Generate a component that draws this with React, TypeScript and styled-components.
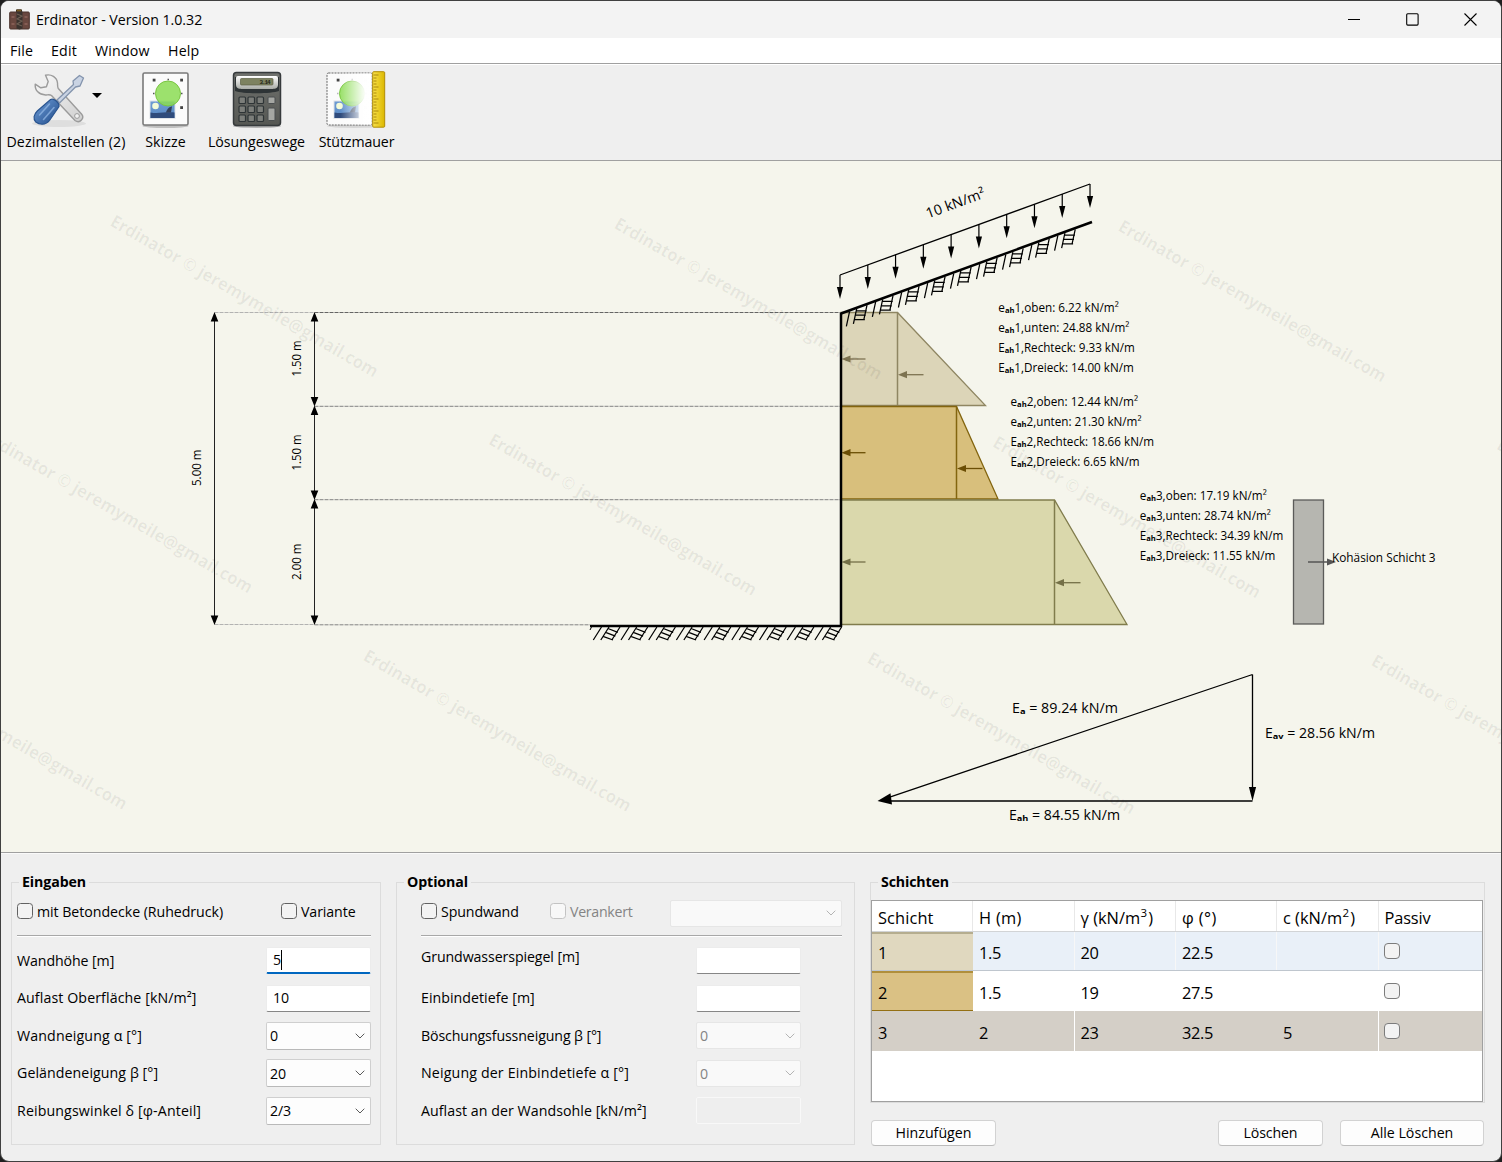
import React from "react";
import styled, { createGlobalStyle } from "styled-components";

const FONT = '"Open Sans", "Noto Sans", sans-serif';

const Global = createGlobalStyle`
  html, body { margin: 0; padding: 0; background: #1f1f1f; }
  * { box-sizing: border-box; }
  body { font-family: ${FONT}; font-size: 14.2px; color: #000; }
`;

const Window = styled.div`
  width: 1502px;
  height: 1162px;
  display: flex;
  flex-direction: column;
  border: 1px solid #404040;
  border-radius: 9px;
  overflow: hidden;
  background: #efefef;
`;

const TitleBar = styled.header`
  display: flex;
  align-items: center;
  height: 37px;
  background: #f3f3f3;
  padding-left: 8px;
`;
const Title = styled.span`
  margin-left: 6px;
  flex: 1;
  font-size: 14.2px;
  letter-spacing: -0.04px;
`;
const Caption = styled.div`
  width: 58.5px;
  height: 36px;
  display: flex;
  align-items: center;
  justify-content: center;
`;
const Captions = styled.div`
  display: flex;
  padding-right: 1px;
`;

const MenuBar = styled.nav`
  display: flex;
  align-items: center;
  gap: 18px;
  height: 25px;
  padding-left: 9px;
  background: #fff;
`;
const MenuItem = styled.span<{ $w: number; $ls?: number }>`
  width: ${(p) => p.$w}px;
  white-space: nowrap;
  letter-spacing: ${(p) => p.$ls ?? 0.2}px;
`;

const ToolBar = styled.div`
  display: flex;
  height: 98px;
  border-top: 1px solid #a0a0a0;
  border-bottom: 1px solid #a0a0a0;
  box-shadow: inset 0 1px 0 #fff;
  padding: 6px 0 0 5px;
`;
const Tool = styled.div<{ $w: number; $gap?: number }>`
  width: ${(p) => p.$w}px;
  margin-right: ${(p) => p.$gap ?? 0}px;
  display: flex;
  flex-direction: column;
  align-items: center;
`;
const ToolIcon = styled.div<{ $pad?: string }>`
  display: flex;
  align-items: center;
  height: 60px;
  padding: ${(p) => p.$pad ?? "0"};
`;
const ToolLabel = styled.span<{ $ls?: number }>`
  line-height: 20px;
  margin-top: 2px;
  white-space: nowrap;
  letter-spacing: ${(p) => p.$ls ?? 0}px;
`;
const DropMark = styled.svg`
  margin-bottom: 4px;
`;

const Canvas = styled.main`
  height: 691px;
  background: #f5f5ec;
  svg { display: block; }
`;

const Bottom = styled.section`
  flex: 1;
  display: flex;
  align-items: flex-start;
  border-top: 1px solid #a0a0a0;
  box-shadow: inset 0 1px 0 #fafafa;
  padding: 19px 0 0 10px;
`;
const Group = styled.fieldset<{ $w: number; $h: number; $gap?: number; $pad: string }>`
  margin: 0 ${(p) => p.$gap ?? 0}px 0 0;
  width: ${(p) => p.$w}px;
  height: ${(p) => p.$h}px;
  min-width: 0;
  border: 1px solid #dcdcdc;
  padding: ${(p) => p.$pad};
`;
const Legend = styled.legend<{ $ml: number; $ls?: number }>`
  height: 20px;
  line-height: 20px;
  margin-left: ${(p) => p.$ml}px;
  padding: 0 3px;
  font-size: 14.2px;
  font-weight: 700;
  letter-spacing: ${(p) => p.$ls ?? -0.1}px;
`;
const CheckRow = styled.div<{ $nudge?: number }>`
  display: flex;
  align-items: center;
  height: 28px;
  margin-top: 7px;
`;
const CheckLabel = styled.label<{ $w: number; $off?: boolean; $ls?: number }>`
  display: flex;
  align-items: center;
  gap: 4px;
  width: ${(p) => p.$w}px;
  height: 20px;
  margin-bottom: 3px;
  white-space: nowrap;
  color: ${(p) => (p.$off ? "#848484" : "#000")};
  letter-spacing: ${(p) => p.$ls ?? -0.05}px;
`;
const Box = styled.span<{ $off?: boolean }>`
  flex: none;
  width: 16px;
  height: 16px;
  margin-bottom: 1px;
  border: 1px solid ${(p) => (p.$off ? "#c3c3c3" : "#626262")};
  border-radius: 3.5px;
  background: ${(p) => (p.$off ? "#f8f8f8" : "#f3f3f3")};
`;
const Rule = styled.div`
  height: 2px;
  margin-top: 8px;
  background: #fff;
  border-top: 1px solid #a8a8a8;
`;
const Form = styled.div<{ $end: number }>`
  display: grid;
  grid-template-columns: 1fr 105px;
  grid-auto-rows: 27.5px;
  row-gap: 10px;
  margin: 10px ${(p) => p.$end}px 0 0;
  align-items: center;
`;
const FieldLabel = styled.span<{ $ls?: number; $up?: number }>`
  white-space: nowrap;
  line-height: 20px;
  padding-bottom: ${(p) => p.$up ?? 0}px;
  letter-spacing: ${(p) => p.$ls ?? 0}px;
`;
const Input = styled.div<{ $state?: "focus" | "off" }>`
  display: flex;
  align-items: center;
  height: 27px;
  padding: 0 0 1px 6px;
  border: 1px solid ${(p) => (p.$state === "off" ? "#f8f8f8" : "#ececec")};
  border-bottom: ${(p) =>
    p.$state === "focus" ? "2px solid #0067c0" : p.$state === "off" ? "1px solid #f8f8f8" : "1px solid #868686"};
  border-radius: 2px;
  background: ${(p) => (p.$state === "off" ? "#eeeeee" : "#fff")};
  letter-spacing: -0.2px;
`;
const Caret = styled.span`
  width: 1px;
  height: 20px;
  background: #000;
`;
const SelectBox = styled.div<{ $off?: boolean; $w?: number }>`
  display: flex;
  align-items: center;
  justify-content: space-between;
  width: ${(p) => (p.$w ? p.$w + "px" : "auto")};
  height: ${(p) => (p.$off ? 27 : 28)}px;
  padding: 0 5px 0 3px;
  border: 1px solid ${(p) => (p.$off ? "#e6e6e6" : "#cfcfcf")};
  border-bottom-color: ${(p) => (p.$off ? "#e6e6e6" : "#b9b9b9")};
  border-radius: 2px;
  background: ${(p) => (p.$off ? "#f9f9f9" : "#fdfdfd")};
  color: ${(p) => (p.$off ? "#848484" : "#000")};
  letter-spacing: -0.2px;
`;

const LayerPane = styled.div`
  width: 615px;
  display: flex;
  flex-direction: column;
`;
const Table = styled.div`
  width: 612px;
  height: 202px;
  margin-top: 8px;
  background: #fff;
  border: 1px solid #a0a0a0;
  font-size: 16.4px;
`;
const COLS = "101px 101.5px 101.5px 101px 101.5px 1fr";
const HeadRow = styled.div`
  display: grid;
  grid-template-columns: ${COLS};
  height: 31px;
  border-bottom: 1px solid #d2d4d6;
`;
const HeadCell = styled.div<{ $ls?: number }>`
  display: flex;
  align-items: center;
  padding: 2px 0 0 6px;
  border-right: 1px solid #e8e8e8;
  white-space: nowrap;
  letter-spacing: ${(p) => p.$ls ?? 0}px;
  &:last-child { border-right: 0; }
`;
const Sup = styled.span`
  font-size: 11.5px;
  margin: 0 1px 9px 0.5px;
`;
const BodyRow = styled.div<{ $bg: string; $line?: string; $h: number }>`
  display: grid;
  grid-template-columns: ${COLS};
  height: ${(p) => p.$h}px;
  background: ${(p) => p.$bg};
  border-bottom: ${(p) => (p.$line ? `1px solid ${p.$line}` : "0")};
`;
const Cell = styled.div<{ $bg?: string; $top?: string; $bottom?: string; $sep?: string }>`
  display: flex;
  align-items: center;
  padding: 2px 0 0 6px;
  letter-spacing: -0.35px;
  background: ${(p) => p.$bg ?? "transparent"};
  box-shadow: ${(p) =>
    [
      p.$top && `inset 0 2px 0 ${p.$top}`,
      p.$bottom && `inset 0 -1px 0 ${p.$bottom}`,
      p.$sep && `inset -1px 0 0 ${p.$sep}`,
    ]
      .filter(Boolean)
      .join(", ") || "none"};
`;
const TableBox = styled.span`
  width: 16px;
  height: 16px;
  margin: 0 0 2px -1px;
  border: 1px solid #7c7c7c;
  border-radius: 4px;
  background: #f3f3f3;
`;
const Buttons = styled.div`
  display: flex;
  margin-top: 17px;
  padding-left: 1px;
`;
const Button = styled.button<{ $w: number; $ml?: number; $ls?: number }>`
  width: ${(p) => p.$w}px;
  height: 26px;
  margin: 0 0 0 ${(p) => p.$ml ?? 0}px;
  padding: 0 0 1px;
  border: 1px solid #d2d2d2;
  border-bottom-color: #bcbcbc;
  border-radius: 4px;
  background: #fdfdfd;
  font: 14.2px ${FONT};
  letter-spacing: ${(p) => p.$ls ?? 0}px;
`;

const Chevron = ({ off }: { off?: boolean }) => (
  <svg width="10" height="6" viewBox="0 0 10 6">
    <path d="M.7.7 5 5 9.3.7" fill="none" stroke={off ? "#b4b4b4" : "#5a5a5a"} strokeWidth="1" />
  </svg>
);

const AppIcon = () => (
  <svg width="21" height="21" viewBox="0 0 21 21">
    <path d="M7.500 3V.8h5V3" fill="#8d6b25" stroke="#40321c" />
    <rect x=".7" y="3" width="19.600" height="17" rx="1" fill="#69473f" stroke="#4a332d" />
    <path d="M7.500 2.500h6v17l-3 1-3-1z" fill="#3a322e" />
    <path d="m8 5 5 2-5 3 5 2-5 3 5 2" fill="none" stroke="#6b5d52" strokeWidth="1.200" />
    <path d="M2.500 8h3M15.500 8h3M2.500 15h3M15.500 15h3" stroke="#a1736a" strokeWidth="1.200" />
  </svg>
);

const ToolsIcon = () => (
  <svg width="56" height="56" viewBox="0 0 56 56">
    <defs>
      <linearGradient id="steel" x1="0" y1="0" x2="1" y2="1">
        <stop offset="0" stopColor="#fafafa" />
        <stop offset="1" stopColor="#cfcfcf" />
      </linearGradient>
      <linearGradient id="handle" x1="0" y1="0" x2="1" y2="1">
        <stop offset="0" stopColor="#6f9fdb" />
        <stop offset="1" stopColor="#204a87" />
      </linearGradient>
    </defs>
    <ellipse cx="28" cy="51.500" rx="27" ry="3.500" fill="#000" opacity=".07" />
    <path
      d="M14.500 3.200C20 1.800 26 5 26.500 11c.2 2-.2 4 .8 5.500L50.500 42c3.500 4 -1.500 10-6.500 6.500L20.500 23.500C18.500 22 16.500 23 14.500 23 8 22.700 3.800 18.500 4.200 12.200l5.600 3.600 5.600-1 1.800-5.300z"
      fill="url(#steel)" stroke="#9b9b9b" strokeWidth="1.400" strokeLinejoin="round"
    />
    <circle cx="46" cy="44" r="2.400" fill="#f2f2f2" stroke="#9b9b9b" />
    <path d="M26 28 42.500 12.500 42 9l6.500-5.500L52.500 6l-3.500 8-4.500 1L28.500 31z" fill="#c9d3e3" stroke="#8494ad" strokeWidth="1.300" strokeLinejoin="round" />
    <path d="M19.500 27.500c3.500-1.500 9 3 8.500 7L18.500 48.500c-4 5-10 4.500-13.700 1.500-3-3-2-7.500 1.500-11z" fill="url(#handle)" stroke="#2a5590" strokeWidth="1.200" />
    <path d="m18.500 32-10 11M23 35.500 12.500 47.500" stroke="#9cc0ec" strokeWidth="1.600" strokeLinecap="round" opacity=".65" />
  </svg>
);

const Sheet = ({ faded }: { faded?: boolean }) => (
  <>
    <rect x="1" y="2" width="45" height="52" rx="1.500" fill="#fbfbfb" stroke={faded ? "#666" : "#7a7a7a"}
      strokeWidth={faded ? 1 : 1.600} strokeDasharray={faded ? "2 1" : undefined} />
    {[[12, 9], [39.500, 9], [39.500, 36.500]].map(([x, y]) => (
      <rect key={`${x}-${y}`} x={x - 1.300} y={y - 1.300} width="2.800" height="2.800" fill="#444" opacity={faded && x > 20 ? 0.15 : 1} />
    ))}
    <path d="M25.500 8.500h1.500M11 22.500h1.500M39 22.500h1.500" stroke="#555" strokeWidth="1.500" opacity={faded ? 0.4 : 1} />
    <rect x="8" y="30" width="25" height="17.500" fill="url(#photo)" stroke="#dfe3e8" />
    <path d="M8.500 41.500c8 1.500 16-1 24 0v5.500h-24z" fill="#2f4b7c" />
    <path d="M24 41.500c1-4 4-6 6-6l-1 6z" fill="#33405a" />
    <circle cx="13.500" cy="35" r="3.300" fill="#f4fbd8" />
    <circle cx="26" cy="22.500" r="12.500" fill="#8bdc54" fillOpacity=".85" stroke="#79c541" strokeWidth="1" />
    {faded && <rect x="1.500" y="2.500" width="44" height="51" fill="url(#fade)" />}
  </>
);

const SheetDefs = () => (
  <defs>
    <linearGradient id="photo" x1="0" y1="0" x2="0" y2="1">
      <stop offset="0" stopColor="#6f9cd3" />
      <stop offset="1" stopColor="#5687c3" />
    </linearGradient>
    <linearGradient id="fade" x1="0" x2="1">
      <stop offset=".3" stopColor="#fff" stopOpacity="0" />
      <stop offset=".85" stopColor="#fff" stopOpacity=".96" />
    </linearGradient>
    <linearGradient id="gold" x1="0" x2="1">
      <stop offset="0" stopColor="#f7e04a" />
      <stop offset="1" stopColor="#dcb800" />
    </linearGradient>
  </defs>
);

const SketchIcon = () => (
  <svg width="47" height="58" viewBox="0 0 47 58">
    <SheetDefs />
    <ellipse cx="23.500" cy="55" rx="23" ry="2" fill="#000" opacity=".2" />
    <Sheet />
  </svg>
);

const RulerIcon = () => (
  <svg width="60" height="58" viewBox="0 0 60 58">
    <SheetDefs />
    <ellipse cx="28" cy="55" rx="27" ry="2" fill="#000" opacity=".1" />
    <Sheet faded />
    <rect x="46.700" y=".7" width="12" height="55.500" rx="1" fill="url(#gold)" stroke="#b08d06" />
    {Array.from({ length: 17 }, (_, i) => (
      <path key={i} d={`M47.500 ${4 + i * 3}h${i % 4 === 0 ? 5 : 3}`} stroke="#a58208" strokeWidth=".9" />
    ))}
  </svg>
);

const CalcIcon = () => (
  <svg width="50" height="58" viewBox="0 0 50 58">
    <defs>
      <linearGradient id="body" x1="0" y1="0" x2="0" y2="1">
        <stop offset="0" stopColor="#70726e" />
        <stop offset="1" stopColor="#555753" />
      </linearGradient>
      <linearGradient id="panel" x1="0" y1="0" x2="0" y2="1">
        <stop offset="0" stopColor="#fff" />
        <stop offset="1" stopColor="#a9aca6" />
      </linearGradient>
    </defs>
    <ellipse cx="25" cy="55" rx="24" ry="2" fill="#000" opacity=".25" />
    <rect x="1.500" y="1.500" width="47" height="53" rx="3" fill="url(#body)" stroke="#363a3c" strokeWidth="1.500" />
    <path d="M3 6h44v14c-8 3-36 3-44 0z" fill="#2e3436" />
    <path d="M6 5h38a2 2 0 0 1 2 2v6.500c0 4-3 4.500-7 4.500H11c-4 0-7-.5-7-4.500V7a2 2 0 0 1 2-2z" fill="url(#panel)" />
    <rect x="8.500" y="7.500" width="32.500" height="6.500" rx="1" fill="#7d8260" stroke="#5c6045" strokeWidth=".7" />
    <text x="27.500" y="13" fontFamily="Liberation Mono, monospace" fontSize="6" fontWeight="700" textLength="11" fill="#1f2417">3.14</text>
    {[0, 1, 2].map((r) =>
      [0, 1, 2].map((c) => (
        <rect key={`${r}${c}`} x={7 + c * 9} y={26 + r * 9} width="6.500" height="6.500" rx="1" fill="#7c7e7a" stroke="#2e3436" strokeWidth="1.200" />
      )),
    )}
    <rect x="36" y="26" width="7" height="6.500" rx="1" fill="#a5a7a3" stroke="#4b4f50" />
    <rect x="36" y="37" width="7" height="12.500" rx="1" fill="#a5a7a3" stroke="#4b4f50" />
  </svg>
);

/* ---------- drawing ---------- */

type TextProps = { x: number; y: number; w: number; s?: number; r?: number; bold?: boolean; children: React.ReactNode };
const T = ({ x, y, w, s = 12.400, r, bold, children }: TextProps) => (
  <text x={x} y={y} fontSize={s} fontWeight={bold ? 700 : 400} textLength={w} lengthAdjust="spacingAndGlyphs" transform={r ? `rotate(${r} ${x} ${y})` : undefined}>
    {children}
  </text>
);

const Sub = ({ children }: { children: string }) => <tspan fontWeight="700">{children}</tspan>;

const Dim = ({ x, y1, y2 }: { x: number; y1: number; y2: number }) => (
  <g fill="#000">
    <path d={`M${x} ${y1 + 5}V${y2 - 5}`} stroke="#222" strokeWidth="1" />
    <path d={`M${x} ${y1 - 0.500}l3.800 9.500h-7.600zM${x} ${y2 + 0.500}l3.800 -9.500h-7.600z`} />
  </g>
);

const ArrowLeft = ({ x, y, len = 24, color }: { x: number; y: number; len?: number; color: string }) => (
  <g>
    <path d={`M${x + 6} ${y}H${x + len}`} stroke={color} strokeWidth="1.300" />
    <path d={`M${x} ${y}l9 -3.600v7.200z`} fill={color} />
  </g>
);

const Hatch = ({ from, count }: { from: number; count: number }) => (
  <g stroke="#000" strokeWidth="1.250" fill="none">
    {Array.from({ length: count }, (_, i) => {
      const x = from + i * 27.700;
      return (
        <path
          key={i}
          d={`M${x + 11.500} 1L${x + 3.300} 14M${x + 19} 1L${x + 10.800} 14M${x + 30} 1L${x + 21.800} 14M${x + 18} 2.500l9.800 3.800M${x + 15.600} 6.300l9.800 3.800M${x + 13} 10.300l10 3.700`}
        />
      );
    })}
  </g>
);

const layers = [
  { n: 1, top: 312.500, bot: 405.500, right: 897.500, tip: 985.500, fill: "#dcd5b8", line: "#8f8662", arrow: "#7d7351", a1: 359, a2: 374.700,
    tx: 998.300, ty: 312, oben: "6.22", unten: "24.88", re: "9.33", dr: "14.00", w: [120.500, 131, 136.500, 135.500] },
  { n: 2, top: 406.500, bot: 499, right: 956.500, tip: 998, fill: "#d8bf7c", line: "#83650f", arrow: "#6b4e05", a1: 452.700, a2: 468.500,
    tx: 1010.500, ty: 406, oben: "12.44", unten: "21.30", re: "18.66", dr: "6.65", w: [127.500, 131, 143.500, 129] },
  { n: 3, top: 500, bot: 624.500, right: 1054.500, tip: 1127, fill: "#dad8ac", line: "#807c4c", arrow: "#747047", a1: 562, a2: 582.700,
    tx: 1139.800, ty: 500, oben: "17.19", unten: "28.74", re: "34.39", dr: "11.55", w: [127, 131, 143.500, 135.500] },
];

const marks = [
  [109, 225], [613, 227.500], [1117, 230],
  [-16.500, 441], [487.500, 443.500], [991.500, 446], [1495.500, 448.500],
  [-142, 657.500], [362, 659.500], [866, 662], [1370, 664.500],
];

const Drawing = () => (
  <svg width="1500" height="691" viewBox="1 161 1500 691" fontFamily="Open Sans, Noto Sans, sans-serif" fill="#000">
    {layers.map((l) => (
      <g key={l.n}>
        <path d={`M${l.right} ${l.top}H841V${l.bot}H${l.tip}z`} fill={l.fill} stroke={l.line} strokeWidth="1.300" />
        <path d={`M${l.right} ${l.top}V${l.bot}`} stroke={l.line} strokeWidth="1.500" />
      </g>
    ))}
    <g stroke="#555" strokeDasharray="4 1" strokeWidth=".9">
      <path d="M214.500 312.500H314.500M214.500 624.500H314.500" stroke="#aaa" />
      <path d="M314.500 312.500H841" />
      <path d="M314.500 406.300H841M314.500 499.700H841M314.500 624.800H590" stroke="#777" />
    </g>
    {layers.map((l) => (
      <g key={l.n}>
        <ArrowLeft x={841.500} y={l.a1} color={l.arrow} />
        <ArrowLeft x={l.right + 0.500} y={l.a2} len={25.500} color={l.arrow} />
      </g>
    ))}
    <rect x="1293.500" y="500" width="30" height="124" fill="#b6b6b0" stroke="#5b5b59" strokeWidth="1.300" />
    <path d="M1308 562h20" stroke="#555" strokeWidth="1.500" />
    <path d="M1336 562l-9-3.600v7.200z" fill="#555" />

    <Dim x={214.500} y1={312.500} y2={624.500} />
    <Dim x={314.500} y1={312.500} y2={406} />
    <Dim x={314.500} y1={406} y2={499.500} />
    <Dim x={314.500} y1={499.500} y2={624.500} />
    <T x={301} y={376.500} w={36} r={-90}>1.50 m</T>
    <T x={301} y={470.500} w={36} r={-90}>1.50 m</T>
    <T x={301} y={580} w={36.500} r={-90}>2.00 m</T>
    <T x={201} y={486} w={36.500} r={-90}>5.00 m</T>

    <path d="M841 313V627" stroke="#000" strokeWidth="2.500" />
    <path d="M590 626H842" stroke="#000" strokeWidth="2.500" />
    <path d="M841 313.500 1092 222" stroke="#000" strokeWidth="2.500" />
    <g transform="translate(590 626)">
      <path d="M1.500 1 0 4" stroke="#000" />
      <Hatch from={0} count={9} />
    </g>
    <g transform="translate(841 313.500) rotate(-20)">
      <Hatch from={-2.700} count={9} />
    </g>

    <path d="M840 275 1090 184" stroke="#000" strokeWidth="1.300" />
    {Array.from({ length: 10 }, (_, i) => {
      const x = 840 + i * 27.780;
      const y = 275 - i * 10.110;
      return (
        <g key={i}>
          <path d={`M${x} ${y}v15`} stroke="#000" strokeWidth="1.200" />
          <path d={`M${x} ${y + 24}l-3.100 -12h6.200z`} />
        </g>
      );
    })}
    <T x={928} y={218.500} w={62} s={14.200} r={-20}>10 kN/m²</T>

    {layers.map((l) => (
      <g key={l.n}>
        <T x={l.tx} y={l.ty} w={l.w[0]}>e<Sub>ₐₕ</Sub>{`${l.n},oben: ${l.oben} kN/m²`}</T>
        <T x={l.tx} y={l.ty + 20} w={l.w[1]}>e<Sub>ₐₕ</Sub>{`${l.n},unten: ${l.unten} kN/m²`}</T>
        <T x={l.tx} y={l.ty + 40} w={l.w[2]}>E<Sub>ₐₕ</Sub>{`${l.n},Rechteck: ${l.re} kN/m`}</T>
        <T x={l.tx} y={l.ty + 60} w={l.w[3]}>E<Sub>ₐₕ</Sub>{`${l.n},Dreieck: ${l.dr} kN/m`}</T>
      </g>
    ))}
    <T x={1332} y={562} w={103.500}>Kohäsion Schicht 3</T>

    <path d="M1252.500 674.500V790M1252.500 801H888M889 797.300 1252.500 674.500" fill="none" stroke="#000" strokeWidth="1.300" />
    <path d="M877.500 801 890.500 793.200 892 804.500zM1252.500 801l-3.600-14h7.200z" />
    <T x={1012} y={713} w={106} s={14.200}>E<Sub>ₐ</Sub> = 89.24 kN/m</T>
    <T x={1265} y={738.300} w={110} s={14.200}>E<Sub>ₐᵥ</Sub> = 28.56 kN/m</T>
    <T x={1009} y={820} w={111} s={14.200}>E<Sub>ₐₕ</Sub> = 84.55 kN/m</T>

    <g fill="#000" fillOpacity=".062">
      {marks.map(([x, y]) => (
        <T key={`${x}`} x={x} y={y} w={306} s={17.600} r={30} bold>Erdinator © jeremymeile@gmail.com</T>
      ))}
    </g>
  </svg>
);

const rows = [
  { h: 39, bg: "#e9f0f8", line: "#bfc6ce", first: { $bg: "#e0d8bf", $top: "#b5ad8f" }, sep: "#f7f7f7", v: ["1", "1.5", "20", "22.5", ""] },
  { h: 40, bg: "#ffffff", line: undefined, first: { $bg: "#dac184", $top: "#b08f3c", $bottom: "#947013" }, sep: undefined, v: ["2", "1.5", "19", "27.5", ""] },
  { h: 40, bg: "#d4cfc7", line: undefined, first: {}, sep: undefined, v: ["3", "2", "23", "32.5", "5"] },
];

export default function App() {
  return (
    <>
      <Global />
      <Window>
        <TitleBar>
          <AppIcon />
          <Title>Erdinator - Version 1.0.32</Title>
          <Captions>
            <Caption><svg width="12" height="12"><path d="M0 5.500h12" stroke="#000" /></svg></Caption>
            <Caption><svg width="13" height="13"><rect x=".7" y=".7" width="11.400" height="11.400" rx="1" fill="none" stroke="#000" strokeWidth="1.100" /></svg></Caption>
            <Caption><svg width="13" height="13"><path d="m.5.500 12 12m0-12-12 12" stroke="#000" strokeWidth="1.100" /></svg></Caption>
          </Captions>
        </TitleBar>
        <MenuBar>
          <MenuItem $w={23}>File</MenuItem>
          <MenuItem $w={26}>Edit</MenuItem>
          <MenuItem $w={55}>Window</MenuItem>
          <MenuItem $w={32}>Help</MenuItem>
        </MenuBar>
        <ToolBar>
          <Tool $w={120} $gap={16}>
            <ToolIcon $pad="0 0 0 6px">
              <ToolsIcon />
              <DropMark width="20" height="20" viewBox="0 0 20 20"><path d="M5 5h10l-5 5z" /></DropMark>
            </ToolIcon>
            <ToolLabel $ls={0.13}>Dezimalstellen (2)</ToolLabel>
          </Tool>
          <Tool $w={47} $gap={19}>
            <ToolIcon><SketchIcon /></ToolIcon>
            <ToolLabel $ls={0.1}>Skizze</ToolLabel>
          </Tool>
          <Tool $w={97} $gap={14}>
            <ToolIcon><CalcIcon /></ToolIcon>
            <ToolLabel>Lösungeswege</ToolLabel>
          </Tool>
          <Tool $w={75}>
            <ToolIcon $pad="0 2px 0 0"><RulerIcon /></ToolIcon>
            <ToolLabel $ls={-0.1}>Stützmauer</ToolLabel>
          </Tool>
        </ToolBar>
        <Canvas><Drawing /></Canvas>
        <Bottom>
          <Group $w={370} $h={273} $gap={15} $pad="0 9px 0 5px">
            <Legend $ml={2}>Eingaben</Legend>
            <CheckRow>
              <CheckLabel $w={264}><Box />mit Betondecke (Ruhedruck)</CheckLabel>
              <CheckLabel $w={80} $ls={-0.1}><Box />Variante</CheckLabel>
            </CheckRow>
            <Rule />
            <Form $end={0}>
              <FieldLabel $ls={-0.1}>Wandhöhe [m]</FieldLabel><Input $state="focus">5<Caret /></Input>
              <FieldLabel $ls={0.1}>Auflast Oberfläche [kN/m²]</FieldLabel><Input>10</Input>
              <FieldLabel $ls={0.13}>Wandneigung α [°]</FieldLabel><SelectBox>0<Chevron /></SelectBox>
              <FieldLabel $ls={0.07}>Geländeneigung β [°]</FieldLabel><SelectBox>20<Chevron /></SelectBox>
              <FieldLabel $ls={0.12}>Reibungswinkel δ [φ-Anteil]</FieldLabel><SelectBox>2/3<Chevron /></SelectBox>
            </Form>
          </Group>
          <Group $w={459} $h={273} $gap={15} $pad="0 12px 0 24px">
            <Legend $ml={-17}>Optional</Legend>
            <CheckRow>
              <CheckLabel $w={129} $ls={-0.12}><Box />Spundwand</CheckLabel>
              <CheckLabel $w={120} $off $ls={-0.3}><Box $off />Verankert</CheckLabel>
              <SelectBox $off $w={172}><span /><Chevron off /></SelectBox>
            </CheckRow>
            <Rule />
            <Form $end={41}>
              <FieldLabel $up={7} $ls={-0.1}>Grundwasserspiegel [m]</FieldLabel><Input />
              <FieldLabel $ls={0.03}>Einbindetiefe [m]</FieldLabel><Input />
              <FieldLabel $ls={-0.12}>Böschungsfussneigung β [°]</FieldLabel><SelectBox $off>0<Chevron off /></SelectBox>
              <FieldLabel $ls={0.15}>Neigung der Einbindetiefe α [°]</FieldLabel><SelectBox $off>0<Chevron off /></SelectBox>
              <FieldLabel $ls={0.05}>Auflast an der Wandsohle [kN/m²]</FieldLabel><Input $state="off" />
            </Form>
          </Group>
          <LayerPane>
            <Group $w={615} $h={231} $pad="0">
              <Legend $ml={7} $ls={-0.15}>Schichten</Legend>
              <Table>
                <HeadRow>
                  <HeadCell $ls={0.1}>Schicht</HeadCell>
                  <HeadCell $ls={0.3}>H (m)</HeadCell>
                  <HeadCell>γ (kN/m<Sup>3</Sup>)</HeadCell>
                  <HeadCell $ls={0.4}>φ (°)</HeadCell>
                  <HeadCell>c (kN/m<Sup>2</Sup>)</HeadCell>
                  <HeadCell $ls={-0.15}>Passiv</HeadCell>
                </HeadRow>
                {rows.map((r, ri) => (
                  <BodyRow key={ri} $bg={r.bg} $line={r.line} $h={r.h}>
                    {r.v.map((v, i) => (
                      <Cell key={i} {...(i === 0 ? r.first : {})} $sep={i === 0 ? undefined : ri === 2 && (i === 1 || i === 4) ? "#fff" : r.sep}>
                        {v}
                      </Cell>
                    ))}
                    <Cell><TableBox /></Cell>
                  </BodyRow>
                ))}
              </Table>
            </Group>
            <Buttons>
              <Button $w={125}>Hinzufügen</Button>
              <Button $w={105} $ml={222} $ls={-0.15}>Löschen</Button>
              <Button $w={144} $ml={17}>Alle Löschen</Button>
            </Buttons>
          </LayerPane>
        </Bottom>
      </Window>
    </>
  );
}
